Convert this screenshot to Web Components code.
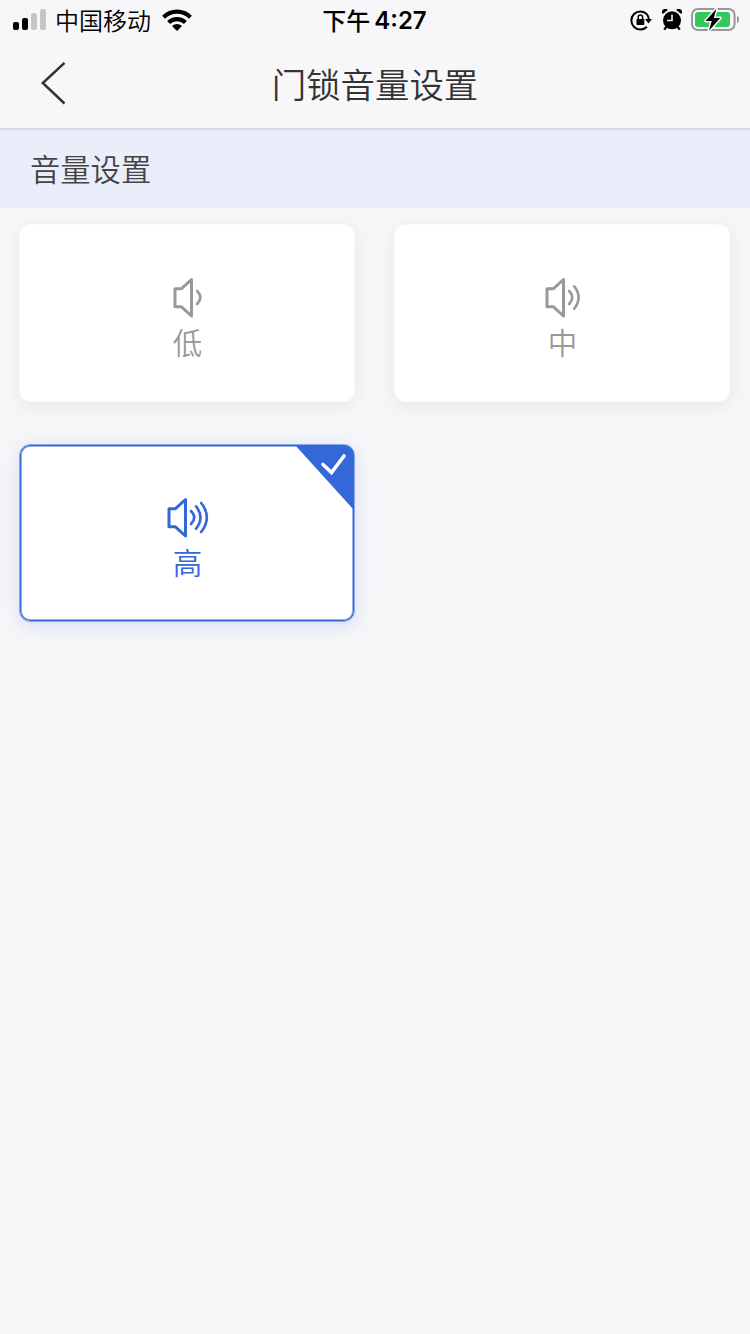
<!DOCTYPE html>
<html lang="zh-CN">
<head>
<meta charset="UTF-8">
<meta name="viewport" content="width=device-width, initial-scale=1">
<title>门锁音量设置</title>
<style>
  body {
    margin: 0;
    background: #f7f7f9;
    font-family: "Noto Sans CJK SC", sans-serif;
  }
</style>
</head>
<body>
<volume-page>
  <status-bar carrier="中国移动" period="下午" time="4:27"></status-bar>
  <nav-bar>门锁音量设置</nav-bar>
  <section-title>音量设置</section-title>
  <option-grid>
    <volume-option level="1">低</volume-option>
    <volume-option level="2">中</volume-option>
    <volume-option level="3" selected>高</volume-option>
  </option-grid>
</volume-page>

<script>
class VolumePage extends HTMLElement {
  constructor() {
    super();
    this.attachShadow({ mode: 'open' });
    this.shadowRoot.innerHTML = `
      <style>
        :host {
          display: flex;
          flex-direction: column;
          width: 750px;
          height: 1334px;
          overflow: hidden;
          background: #f7f7f9;
        }
      </style>
      <slot></slot>
    `;
  }
}

class StatusBar extends HTMLElement {
  constructor() {
    super();
    this.attachShadow({ mode: 'open' });
  }

  connectedCallback() {
    this.shadowRoot.innerHTML = `
      <style>
        :host {
          display: grid;
          grid-template-columns: 1fr auto 1fr;
          grid-template-rows: 40px;
          align-items: center;
          height: 40px;
          padding: 0 11px 0 13px;
          color: #000;
          font-size: 24px;
          line-height: 40px;
        }

        .left, .center, .right {
          display: flex;
          align-items: center;
          height: 40px;
        }

        .right {
          justify-content: flex-end;
        }

        .carrier {
          margin: 0 11px 0 8px;
          font-weight: 350;
        }

        .center {
          gap: 4px;
          margin-left: -3px;
          font-weight: 500;
        }

        .time {
          padding-top: 2px;
          font-family: Inter, sans-serif;
          font-weight: 600;
        }

        svg {
          display: block;
        }

        .lock {
          margin-right: 10px;
        }

        .alarm {
          margin-right: 9px;
        }
      </style>
      <div class="left">
        <svg width="34" height="22" viewBox="0 0 34 22">
          <rect x="0" y="13" width="6" height="8" rx="2"/>
          <rect x="9" y="9" width="6" height="12" rx="2"/>
          <rect x="18" y="4" width="6" height="17" rx="2" fill="#c6c6c8"/>
          <rect x="27" y="0" width="6" height="21" rx="2" fill="#c6c6c8"/>
        </svg>
        <span class="carrier">${this.getAttribute('carrier')}</span>
        <svg width="30" height="22" viewBox="0 0 30 22">
          <g fill="none" stroke="#000" stroke-width="4.2">
            <path d="M1.600 8.200a19 19 0 0 1 26.800 0"/>
            <path d="M6.600 13.600a12 12 0 0 1 16.800 0"/>
          </g>
          <path d="M10 17.100a7.200 7.200 0 0 1 10 0L15 22z"/>
        </svg>
      </div>
      <div class="center">
        <span>${this.getAttribute('period')}</span>
        <span class="time">${this.getAttribute('time')}</span>
      </div>
      <div class="right">
        <svg class="lock" width="22" height="22" viewBox="0 0 22 22">
          <path d="M16.900 5.300A9 9 0 1 0 16.900 17.700M16.900 5.300a9 9 0 0 1 2 5" fill="none" stroke="#000" stroke-width="2"/>
          <path d="M15 10h7l-3.500 4.500z"/>
          <rect x="6.500" y="10" width="7.800" height="6" rx="0.800"/>
          <path d="M8.200 10V8.200a2.200 2.200 0 0 1 4.400 0V10" fill="none" stroke="#000" stroke-width="1.500"/>
        </svg>
        <svg class="alarm" width="20" height="22" viewBox="0 0 20 22">
          <circle cx="10" cy="11.300" r="9"/>
          <path d="M.8 4.900A3 3 0 0 1 5.800.9zM19.200 4.900a3 3 0 0 0-5-4z"/>
          <path d="M4.300 17.600 2.300 20.600M15.700 17.600l2 3" stroke="#000" stroke-width="2.400"/>
          <path d="M10 5.500v6H5" fill="none" stroke="#f7f7f9" stroke-width="1.600"/>
        </svg>
        <svg width="48" height="26" viewBox="0 0 48 26">
          <rect x="1" y="2" width="42.600" height="21" rx="6" fill="none" stroke="#98989b" stroke-width="2"/>
          <rect x="4" y="5" width="35" height="15" rx="3" fill="#34c759"/>
          <path d="M46 8.800c1.500.8 2 2.200 2 3.700s-.5 3-2 3.800z" fill="#98989b"/>
          <path d="M25.300 2 14.500 13.900h6.300L18 23.500l11.300-12.600h-6.500z" fill="#000" stroke="#f7f7f9" stroke-width="3" paint-order="stroke" stroke-linejoin="round"/>
        </svg>
      </div>
    `;
  }
}

class NavBar extends HTMLElement {
  constructor() {
    super();
    this.attachShadow({ mode: 'open' });
    this.shadowRoot.innerHTML = `
      <style>
        :host {
          display: grid;
          grid-template-columns: 80px 1fr 80px;
          align-items: center;
          height: 88px;
          border-bottom: 2px solid #dadadc;
          color: #333;
        }

        svg {
          display: block;
          margin: -3px 0 0 40px;
        }

        h1 {
          margin: 0;
          font-size: 34.400px;
          font-weight: 350;
          line-height: 86px;
          height: 88px;
          text-align: center;
        }
      </style>
      <svg width="26" height="44" viewBox="0 0 26 44">
        <path d="M24.500 1.800 2.800 22l21.700 20.500" fill="none" stroke="#333" stroke-width="2.500"/>
      </svg>
      <h1><slot></slot></h1>
    `;
  }
}

class SectionTitle extends HTMLElement {
  constructor() {
    super();
    this.attachShadow({ mode: 'open' });
    this.shadowRoot.innerHTML = `
      <style>
        :host {
          display: block;
          height: 78px;
          padding-left: 30px;
          background: #eaeefb;
          color: #444;
          font-size: 30.300px;
          font-weight: 350;
          line-height: 76px;
        }
      </style>
      <slot></slot>
    `;
  }
}

class OptionGrid extends HTMLElement {
  constructor() {
    super();
    this.attachShadow({ mode: 'open' });
    this.shadowRoot.innerHTML = `
      <style>
        :host {
          display: grid;
          grid-template-columns: 336px 336px;
          grid-auto-rows: 178px;
          gap: 42px 39px;
          padding: 16px 19px;
        }
      </style>
      <slot></slot>
    `;
  }
}

// Sound waves drawn beside the speaker, one set per level
const LEVELS = {
  1: { width: 30, waves: 'M24.200 13.500Q30.500 20 24.200 26.500' },
  2: { width: 36, waves: 'M24.200 13.500Q30.300 20 24.200 26.500M29.200 8.800Q38 20 29.200 31.200' },
  3: { width: 42, waves: 'M24 13.500Q30.500 20 24 26.500M29 8.800Q38 20 29 31.200M34.200 5.500Q45.500 20 34.200 34.500' }
};

class VolumeOption extends HTMLElement {
  constructor() {
    super();
    this.attachShadow({ mode: 'open' });
  }

  connectedCallback() {
    this.render();
    this.addEventListener('click', () => this.select());
  }

  select() {
    for (const option of this.parentElement.children) {
      option.toggleAttribute('selected', option === this);
    }
  }

  render() {
    const { width, waves } = LEVELS[this.getAttribute('level')];

    this.shadowRoot.innerHTML = `
      <style>
        :host {
          position: relative;
          display: flex;
          flex-direction: column;
          align-items: center;
          box-sizing: border-box;
          padding-top: 52px;
          border: 1px solid #fafafb;
          border-radius: 11px;
          background: #fff;
          box-shadow: 0 4px 20px rgba(0, 0, 0, 0.07);
          color: #999;
          font-size: 29.500px;
          font-weight: 350;
          line-height: 44px;
          cursor: pointer;
        }

        :host([selected]) {
          border-color: #8ba8e9;
          box-shadow: inset 0 0 0 1px #3467d8, inset 0 0 0 2px #9ab3ec, 0 4px 20px rgba(52, 103, 216, 0.17);
          color: #3467d8;
        }

        svg {
          display: block;
        }

        .speaker {
          margin-left: 2px;
          flex: none;
        }

        .label {
          padding-left: 1px;
        }

        .check {
          position: absolute;
          top: 0;
          right: 0;
          display: none;
          border-top-right-radius: 10px;
        }

        :host([selected]) .check {
          display: block;
        }
      </style>
      <svg class="speaker" width="${width}" height="42" viewBox="0 -.5 ${width} 42" fill="none" stroke="currentColor" stroke-width="3" stroke-linecap="round">
        <path d="M2 11.300h6.200L18.500 2v36.500L8.200 29.200H2z" stroke-linejoin="round"/>
        <path d="${waves}" stroke-width="2.600"/>
      </svg>
      <span class="label"><slot></slot></span>
      <svg class="check" width="60" height="64" viewBox="0 0 60 64">
        <path d="M1 0h59v64H59z" fill="#3467d8"/>
        <path d="m29 19.500 8.500 8L50 11" fill="none" stroke="#fff" stroke-width="3.600" stroke-linecap="round"/>
      </svg>
    `;
  }
}

customElements.define('volume-page', VolumePage);
customElements.define('status-bar', StatusBar);
customElements.define('nav-bar', NavBar);
customElements.define('section-title', SectionTitle);
customElements.define('option-grid', OptionGrid);
customElements.define('volume-option', VolumeOption);
</script>
</body>
</html>
